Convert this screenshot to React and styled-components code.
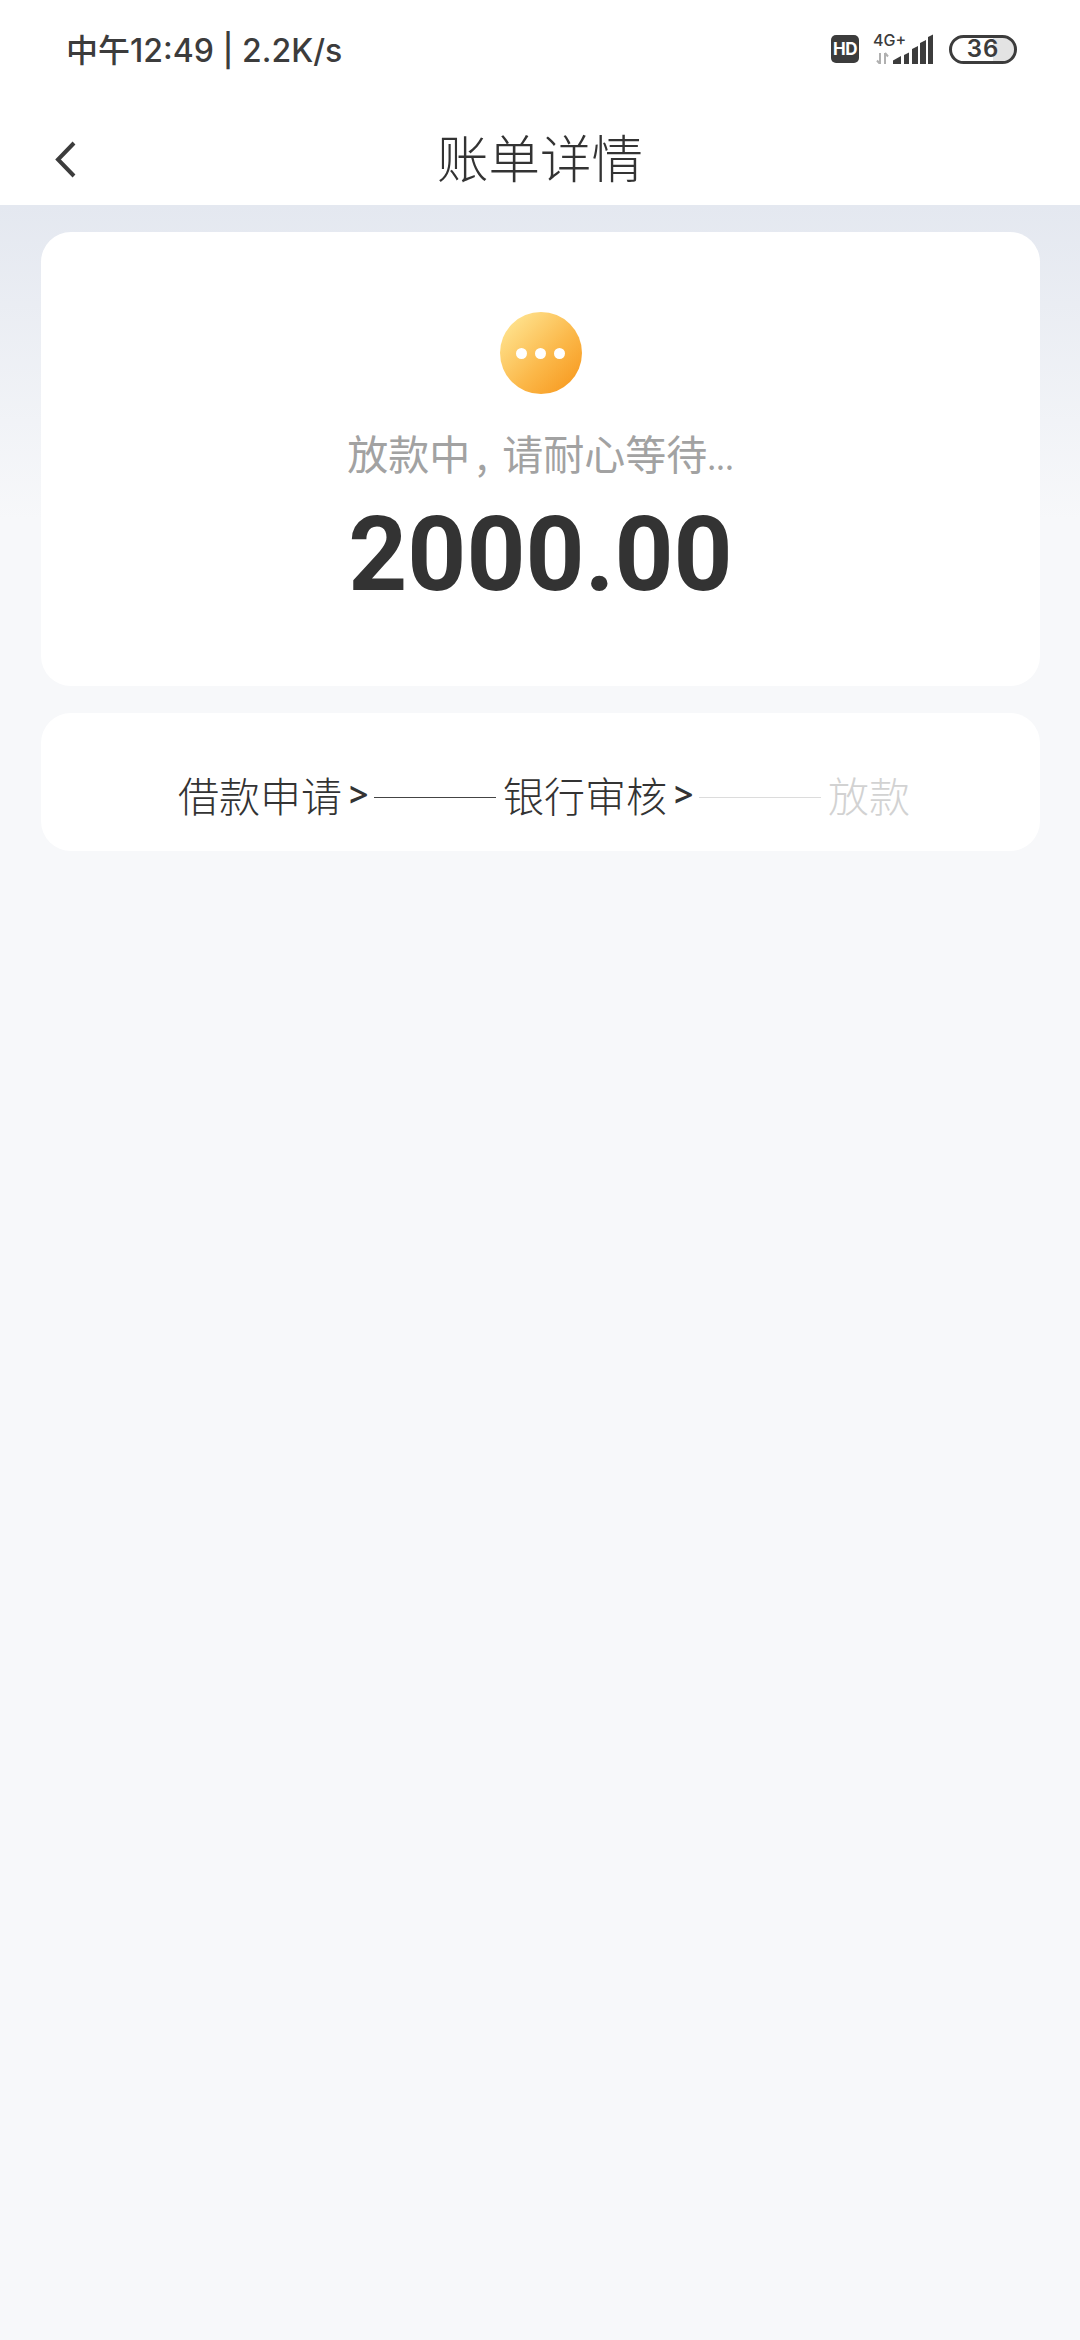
import React from 'react'
import styled, { createGlobalStyle } from 'styled-components'

const GlobalStyle = createGlobalStyle`
  html, body {
    margin: 0;
    padding: 0;
  }
  body {
    font-family: "Noto Sans", "Noto Sans CJK SC", sans-serif;
    background: #f7f8fa;
  }
  * {
    box-sizing: border-box;
  }
`

const Page = styled.div`
  width: 1080px;
  height: 2340px;
  overflow: hidden;
  display: flex;
  flex-direction: column;
  background: linear-gradient(180deg, #e4e8f0 205px, #f7f8fa 520px);
`

const TopArea = styled.header`
  background: #fff;
  height: 205px;
  display: flex;
  flex-direction: column;
`

const StatusBar = styled.div`
  height: 100px;
  padding: 0 63px 4px 66px;
  display: flex;
  align-items: center;
  justify-content: space-between;
  color: #3c3c3c;
`

const StatusText = styled.span`
  font-family: Inter, "Noto Sans CJK SC", sans-serif;
  font-size: 32px;
  font-weight: 500;
`

const StatusIcons = styled.div`
  display: flex;
  align-items: center;
  padding-top: 2px;
`

const HdBadge = styled.span`
  width: 28px;
  height: 28px;
  border-radius: 5px;
  background: #3c3c3c;
  color: #fff;
  font-family: Inter, sans-serif;
  font-size: 17px;
  font-weight: 700;
  letter-spacing: -0.5px;
  display: flex;
  align-items: center;
  justify-content: center;
`

const Network = styled.div`
  position: relative;
  width: 60px;
  height: 30px;
  margin-left: 14px;
`

const NetworkLabel = styled.span`
  position: absolute;
  left: 0;
  top: -3px;
  font-family: Inter, sans-serif;
  font-size: 16px;
  line-height: 18px;
  font-weight: 500;
  color: #3c3c3c;
`

const Battery = styled.div`
  width: 68px;
  height: 29px;
  margin-left: 16px;
  border: 3px solid #3c3c3c;
  border-radius: 15px;
  background: linear-gradient(90deg, #fff 66%, #e3e3e3 66%);
  background-clip: padding-box;
  display: flex;
  align-items: center;
  justify-content: center;
  font-family: Inter, sans-serif;
  font-size: 24px;
  font-weight: 600;
  letter-spacing: 1px;
  color: #3c3c3c;
  line-height: 1;
`

const NavBar = styled.div`
  position: relative;
  height: 105px;
  padding-top: 6px;
  display: flex;
  align-items: center;
  justify-content: center;
`

const BackButton = styled.button`
  position: absolute;
  left: 54px;
  top: 41px;
  width: 24px;
  height: 38px;
  padding: 0;
  border: 0;
  background: transparent;
  display: block;
`

const Title = styled.h1`
  margin: 0;
  font-family: "Noto Sans CJK SC", sans-serif;
  font-size: 51.5px;
  line-height: 60px;
  font-weight: 300;
  color: #333;
`

const Content = styled.main`
  padding: 27px 40px 0 41px;
  display: flex;
  flex-direction: column;
  gap: 27px;
`

const Card = styled.section`
  background: #fff;
  border-radius: 30px;
`

const StatusCard = styled(Card)`
  height: 454px;
  padding-top: 80px;
  display: flex;
  flex-direction: column;
  align-items: center;
`

const PendingIcon = styled.div`
  width: 82px;
  height: 82px;
  border-radius: 50%;
  background: linear-gradient(135deg, #ffe592 8%, #fbb748 58%, #f7981d 95%);
  display: flex;
  align-items: center;
  justify-content: center;
  gap: 8px;
`

const Dot = styled.span`
  width: 11px;
  height: 11px;
  border-radius: 50%;
  background: #fff;
`

const StatusLabel = styled.div`
  margin-top: 33px;
  font-family: "Noto Sans CJK SC", sans-serif;
  font-size: 41px;
  line-height: 50px;
  font-weight: 400;
  color: #a2a2a2;
`

const LabelComma = styled.span`
  display: inline-block;
  width: 32px;
  padding-left: 6px;
`

const LabelDots = styled.span`
  font-size: 32px;
`

const Amount = styled.div`
  margin-top: 13px;
  font-family: Roboto, sans-serif;
  font-size: 103px;
  line-height: 122px;
  font-weight: 700;
  color: #333;
`

const StepsCard = styled(Card)`
  height: 138px;
  padding: 24px 0 0 137px;
  display: flex;
  align-items: center;
`

const StepText = styled.span`
  font-family: "Noto Sans CJK SC", sans-serif;
  font-size: 41px;
  line-height: 50px;
  font-weight: 300;
  color: ${props => (props.$muted ? '#d2d2d2' : '#333')};
`

const StepArrow = styled.span`
  width: 32px;
  padding-left: 7px;
  font-family: "Noto Sans", sans-serif;
  font-size: 34px;
  line-height: 50px;
  font-weight: 600;
  color: #333;
`

const StepLine = styled.span`
  width: 122px;
  height: 1px;
  margin: 6px 7px 0 0;
  background: ${props => (props.$muted ? '#dcdcdc' : '#444')};
`

const Steps = [
  { label: '借款申请', arrow: true },
  { label: '银行审核', arrow: true, mutedLine: true },
  { label: '放款', muted: true },
]

const App = () => (
  <>
    <GlobalStyle />
    <Page>
      <TopArea>
        <StatusBar>
          <StatusText>中午12:49 | 2.2K/s</StatusText>
          <StatusIcons>
            <HdBadge>HD</HdBadge>
            <Network>
              <NetworkLabel>4G+</NetworkLabel>
              <svg width="60" height="30" viewBox="0 0 60 30">
                <path d="M20 30v-3.5l8-4.5v8zM31 30V21l5-2.5V30zM39 30V15l6-3v18zM47 30V9l6-3v24zM55 30V3l5-2.5V30z" fill="#3c3c3c" />
                <path d="M7 19v11M7 30l-3-3.5" stroke="#b0b0b0" strokeWidth="2" fill="none" />
                <path d="M12 30V19M12 19l3 3.5" stroke="#b0b0b0" strokeWidth="2" fill="none" />
              </svg>
            </Network>
            <Battery>36</Battery>
          </StatusIcons>
        </StatusBar>
        <NavBar>
          <BackButton aria-label="back">
            <svg width="24" height="38" viewBox="0 0 24 38">
              <path d="M20 2 L4 18.5 L20 35" stroke="#3c3c3c" strokeWidth="4" fill="none" />
            </svg>
          </BackButton>
          <Title>账单详情</Title>
        </NavBar>
      </TopArea>
      <Content>
        <StatusCard>
          <PendingIcon>
            <Dot />
            <Dot />
            <Dot />
          </PendingIcon>
          <StatusLabel>
            放款中<LabelComma>,</LabelComma>请耐心等待<LabelDots>...</LabelDots>
          </StatusLabel>
          <Amount>2000.00</Amount>
        </StatusCard>
        <StepsCard>
          {Steps.map(step => (
            <React.Fragment key={step.label}>
              <StepText $muted={step.muted}>{step.label}</StepText>
              {step.arrow && <StepArrow>&gt;</StepArrow>}
              {step.arrow && <StepLine $muted={step.mutedLine} />}
            </React.Fragment>
          ))}
        </StepsCard>
      </Content>
    </Page>
  </>
)

export default App
